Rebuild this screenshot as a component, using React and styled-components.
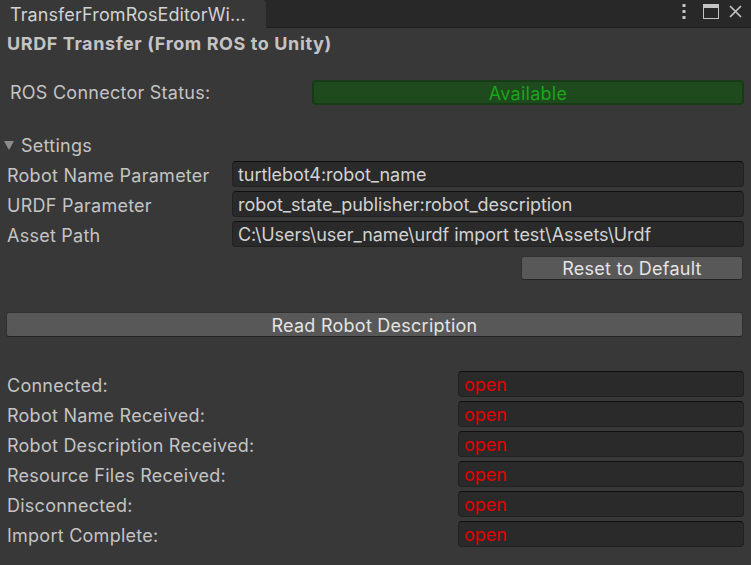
import React from 'react';
import styled, { createGlobalStyle } from 'styled-components';

const Global = createGlobalStyle`
  html, body { margin: 0; padding: 0; background: #383838; }
  * { box-sizing: border-box; }
`;

const Window = styled.div`
  width: 751px;
  height: 565px;
  background: #383838;
  font-family: Inter, "Noto Sans", sans-serif;
  font-size: 18px;
  letter-spacing: 0.25px;
  color: #c4c4c4;
  display: flex;
  flex-direction: column;
  overflow: hidden;
`;

const TabBar = styled.div`
  height: 28px;
  background: #282828;
  display: flex;
  align-items: stretch;
  flex-shrink: 0;
`;

const Tab = styled.div`
  width: 266px;
  background: #383838;
  border-top-right-radius: 4px;
  color: #d2d2d2;
  padding: 4px 0 0 10px;
  line-height: 22px;
  letter-spacing: 0.1px;
  white-space: nowrap;
`;

const TabFiller = styled.div`
  flex: 1;
  border-bottom: 1px solid #1e1e1e;
  display: flex;
  align-items: flex-start;
  justify-content: flex-end;
  gap: 10px;
  padding: 2px 9px 0 0;
`;

const Content = styled.div`
  display: flex;
  flex-direction: column;
  padding: 0 7px 0 6px;
`;

const Title = styled.div`
  margin-top: 4px;
  height: 22px;
  line-height: 24px;
  padding-left: 1px;
  font-weight: 700;
  letter-spacing: 0.6px;
  color: #c4c4c4;
`;

const StatusRow = styled.div`
  margin-top: 26px;
  height: 25px;
  display: flex;
  align-items: center;
`;

const StatusLabel = styled.div`
  width: 306px;
  padding-left: 4px;
`;

const Badge = styled.div`
  flex: 1;
  height: 25px;
  background: #1f4a1e;
  border: 2px solid #173b16;
  border-radius: 4px;
  color: #1aa519;
  text-align: center;
  line-height: 23px;
`;

const Foldout = styled.div`
  margin-top: 29px;
  height: 22px;
  display: flex;
  align-items: center;
  gap: 7px;
  margin-left: -2px;
  color: #c4c4c4;
`;

const Arrow = styled.span`
  width: 0;
  height: 0;
  border-left: 5px solid transparent;
  border-right: 5px solid transparent;
  border-top: 9px solid #8c8c8c;
`;

const FieldList = styled.div`
  margin-top: ${p => p.$top}px;
  display: flex;
  flex-direction: column;
  gap: 4px;
`;

const FieldRow = styled.div`
  height: 26px;
  display: flex;
  align-items: center;
`;

const FieldLabel = styled.div`
  width: ${p => p.$width}px;
  padding-left: 1px;
  padding-top: 3px;
  white-space: nowrap;
`;

const Field = styled.div`
  flex: 1;
  height: 26px;
  background: #2a2a2a;
  border: 1px solid #212121;
  border-top-color: #0f0f0f;
  border-radius: 4px;
  padding-left: 5px;
  line-height: 26px;
  letter-spacing: -0.05px;
  color: ${p => (p.$alert ? '#e30000' : '#d2d2d2')};
  white-space: nowrap;
  overflow: hidden;
`;

const ButtonRow = styled.div`
  margin-top: ${p => p.$top}px;
  display: flex;
  justify-content: flex-end;
  padding-right: 1px;
`;

const Button = styled.div`
  width: ${p => (p.$wide ? '100%' : '222px')};
  height: ${p => p.$h}px;
  background: #585858;
  border: 1px solid #303030;
  border-bottom-color: #242424;
  border-radius: 3px;
  color: #e4e4e4;
  text-align: center;
  line-height: ${p => p.$h}px;
`;

const Kebab = () => (
  <svg width="11" height="18" viewBox="0 0 11 18">
    <rect x="0.5" y="2" width="3" height="3" fill="#c4c4c4" />
    <rect x="0.5" y="8" width="3" height="3" fill="#c4c4c4" />
    <rect x="0.5" y="14" width="3" height="3" fill="#c4c4c4" />
  </svg>
);

const Maximize = () => (
  <svg width="16" height="18" viewBox="0 0 16 18">
    <rect x="0.5" y="2.5" width="15" height="14" fill="none" stroke="#c4c4c4" />
    <rect x="0" y="2" width="16" height="4" fill="#c4c4c4" />
  </svg>
);

const Close = () => (
  <svg width="13" height="18" viewBox="0 0 13 18">
    <path d="M1 4 L12 15 M12 4 L1 15" stroke="#c4c4c4" strokeWidth="1.7" />
  </svg>
);

const params = [
  ['Robot Name Parameter', 'turtlebot4:robot_name'],
  ['URDF Parameter', 'robot_state_publisher:robot_description'],
  ['Asset Path', 'C:\\Users\\user_name\\urdf import test\\Assets\\Urdf'],
];

const stages = [
  'Connected:',
  'Robot Name Received:',
  'Robot Description Received:',
  'Resource Files Received:',
  'Disconnected:',
  'Import Complete:',
];

export default function App() {
  return (
    <Window>
      <Global />
      <TabBar>
        <Tab>TransferFromRosEditorWi...</Tab>
        <TabFiller>
          <Kebab />
          <Maximize />
          <Close />
        </TabFiller>
      </TabBar>
      <Content>
        <Title>URDF Transfer (From ROS to Unity)</Title>
        <StatusRow>
          <StatusLabel>ROS Connector Status:</StatusLabel>
          <Badge>Available</Badge>
        </StatusRow>
        <Foldout>
          <Arrow />
          Settings
        </Foldout>
        <FieldList $top={5}>
          {params.map(([label, value]) => (
            <FieldRow key={label}>
              <FieldLabel $width={226}>{label}</FieldLabel>
              <Field>{value}</Field>
            </FieldRow>
          ))}
        </FieldList>
        <ButtonRow $top={9}>
          <Button $h={24}>Reset to Default</Button>
        </ButtonRow>
        <ButtonRow $top={32}>
          <Button $wide $h={25}>Read Robot Description</Button>
        </ButtonRow>
        <FieldList $top={34}>
          {stages.map(label => (
            <FieldRow key={label}>
              <FieldLabel $width={452}>{label}</FieldLabel>
              <Field $alert>open</Field>
            </FieldRow>
          ))}
        </FieldList>
      </Content>
    </Window>
  );
}
